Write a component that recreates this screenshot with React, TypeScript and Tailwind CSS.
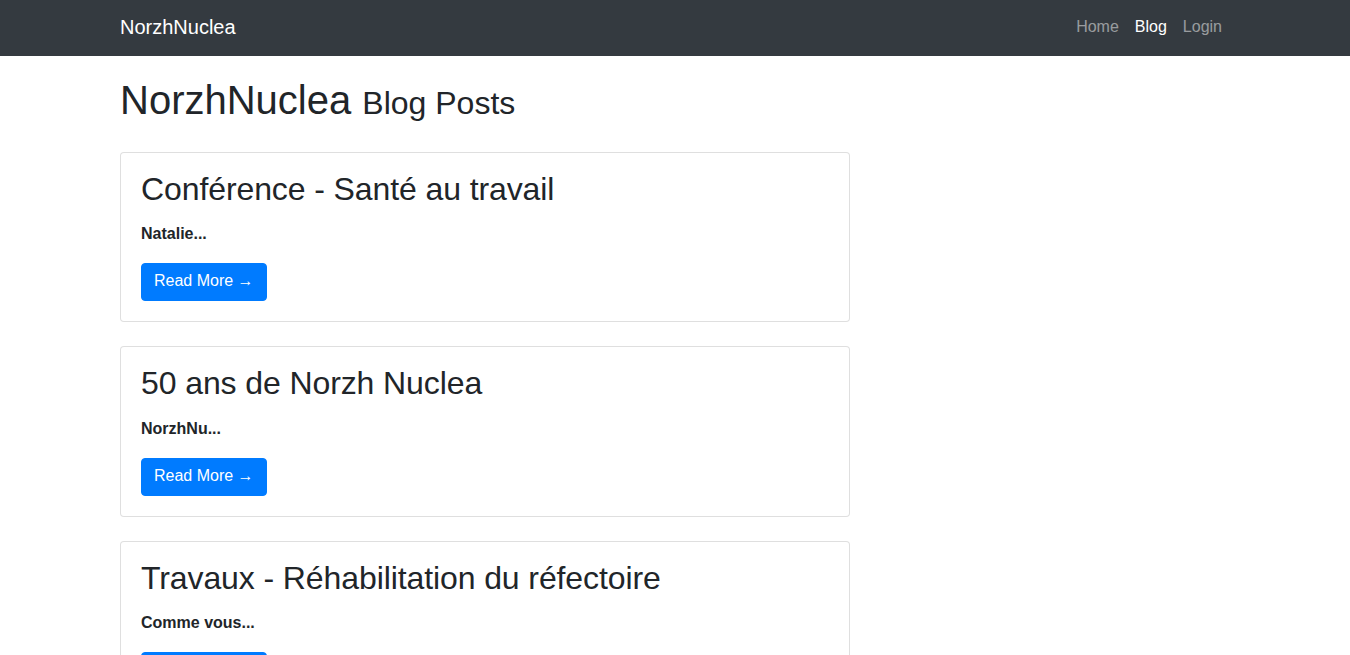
const posts = [
  { title: 'Conférence - Santé au travail', excerpt: 'Natalie...' },
  { title: '50 ans de Norzh Nuclea', excerpt: 'NorzhNu...' },
  { title: 'Travaux - Réhabilitation du réfectoire', excerpt: 'Comme vous...' },
]

const NavBar = () => {
  return (
    <nav className="bg-[#343a40] py-2">
      <div className="mx-auto flex w-[1140px] items-center justify-between px-[15px]">
        <a className="pt-1 pb-[6px] text-[20px] leading-[30px] text-white" href="#">NorzhNuclea</a>
        <ul className="flex text-[16px] leading-[24px]">
          <li><a className="block px-2 pt-[7px] pb-[9px] text-white/50" href="#">Home</a></li>
          <li><a className="block px-2 pt-[7px] pb-[9px] text-white" href="#">Blog</a></li>
          <li><a className="block px-2 pt-[7px] pb-[9px] text-white/50" href="#">Login</a></li>
        </ul>
      </div>
    </nav>
  )
}

type postcardprops = {
  title: string,
  excerpt: string
}

const PostCard = ({ title, excerpt }: postcardprops) => {
  return (
    <div className="mb-6 rounded border border-black/[0.125] bg-white">
      <div className="px-5 pt-[17px] pb-5">
        <h2 className="mb-[15px] text-[32px] leading-[1.2] font-medium tracking-[-0.1px]">{title}</h2>
        <p className="-mt-px mb-[17px] text-[16px] leading-[24px]"><strong className="font-bold">{excerpt}</strong></p>
        <a className="inline-block rounded border border-[#007bff] bg-[#007bff] px-3 pt-[5px] pb-[7px] text-[16px] leading-[24px] text-white" href="#">Read More &rarr;</a>
      </div>
    </div>
  )
}

export default function App() {
  return (
    <div className="min-h-screen bg-white text-[#212529]" style={{ fontFamily: '"Liberation Sans", Arial, sans-serif' }}>
      <NavBar />
      <div className="mx-auto w-[1140px] px-[15px]">
        <div className="w-[730px]">
          <h1 className="mt-5 mb-7 text-[40px] leading-[1.2] font-medium">
            NorzhNuclea <small className="text-[32px]">Blog Posts</small>
          </h1>
          {posts.map((p) => (
            <PostCard key={p.title} title={p.title} excerpt={p.excerpt} />
          ))}
        </div>
      </div>
    </div>
  )
}
